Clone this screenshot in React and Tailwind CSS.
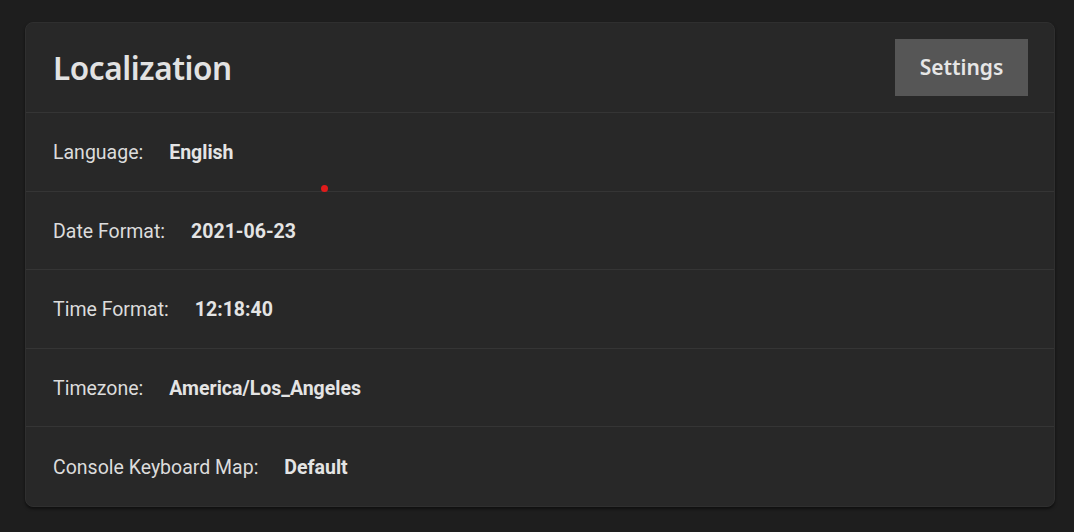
import React from 'react';

const rows = [
  { label: 'Language:', value: 'English' },
  { label: 'Date Format:', value: '2021-06-23' },
  { label: 'Time Format:', value: '12:18:40' },
  { label: 'Timezone:', value: 'America/Los_Angeles' },
  { label: 'Console Keyboard Map:', value: 'Default' },
];

export default function App() {
  return (
    <div className="min-h-[532px] w-full bg-[#1e1e1e] pl-[25px] pr-[19px] pt-[22px] pb-[26px]">
      <div className="relative rounded-lg bg-[#282828] border border-[#2f2f2f] shadow-[0_2px_3px_rgba(0,0,0,0.5)]">
        <div className="flex items-center justify-between h-[90px] pl-[27px] pr-[26px] border-b border-[#353535]">
          <h1 className="text-[31.5px] font-semibold text-[#e2e2e2] tracking-[-0.4px]" style={{ fontFamily: '"Noto Sans", sans-serif' }}>
            Localization
          </h1>
          <button className="w-[133px] h-[57px] bg-[#565656] text-[#e6e6e6] text-[21px] font-semibold" style={{ fontFamily: '"Noto Sans", sans-serif' }}>
            Settings
          </button>
        </div>
        {rows.map((r, i) => (
          <div
            key={r.label}
            className={`flex items-center h-[78.5px] pl-[27px] pt-[2px] text-[19.5px] text-[#dcdcdc] font-['Roboto',sans-serif] ${i < rows.length - 1 ? 'border-b border-[#353535]' : ''}`}
          >
            <span>{r.label}</span>
            <span className="ml-[26px] font-bold text-[#e4e4e4]">{r.value}</span>
          </div>
        ))}
        <div className="absolute left-[295px] top-[162px] w-[7px] h-[7px] rounded-full bg-[#e01b1b]" />
      </div>
    </div>
  );
}
